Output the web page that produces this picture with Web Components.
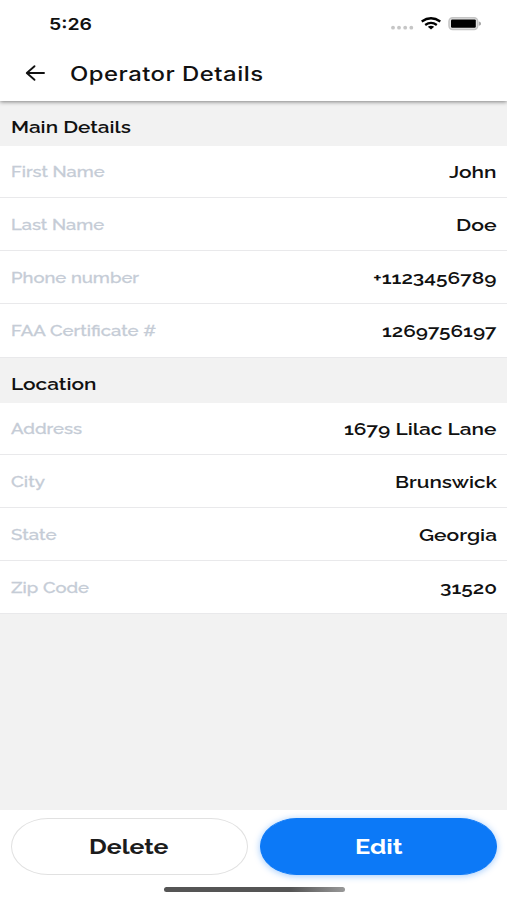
<!DOCTYPE html>
<html lang="en">
<head>
<meta charset="utf-8">
<title>Operator Details</title>
<style>
html,body{margin:0;height:100%;background:#f2f2f2;overflow:hidden}
body{font-family:Raleway,Lato,"Open Sans",sans-serif;color:#111}
</style>
</head>
<body>
<operator-screen></operator-screen>
<script>
function define(name, html, setup) {
  customElements.define(name, class extends HTMLElement {
    connectedCallback() {
      if (this.shadowRoot) return;
      this.attachShadow({mode: 'open'}).innerHTML = html;
      if (setup) setup.call(this, this.shadowRoot);
    }
  });
}

/* Wide text: stretches its glyphs horizontally to the given width. */
define('wide-text', `<style>
:host{display:block;flex:none;white-space:nowrap;line-height:24px;height:24px}
span{display:inline-block;transform-origin:0 50%}
</style><span></span>`, function (root) {
  const s = root.querySelector('span'), w = +this.getAttribute('w');
  s.textContent = this.getAttribute('text');
  this.style.width = w + 'px';
  s.style.transform = `scaleX(${w / s.getBoundingClientRect().width})`;
});

define('status-bar', `<style>
:host{display:flex;height:47px;padding:0 26px 0 49px;box-sizing:border-box;align-items:center;justify-content:space-between}
wide-text{font:600 16.5px/24px Inter,sans-serif}
svg{display:block}
</style><wide-text text="5:26" w="43"></wide-text>
<svg width="92" height="20" viewBox="389 14 92 20">
<g fill="#c6c6c6"><circle cx="393" cy="27.7" r="1.9"/><circle cx="399" cy="27.7" r="1.9"/><circle cx="405.2" cy="27.7" r="1.9"/><circle cx="411.3" cy="27.7" r="1.9"/></g>
<g fill="none" stroke="#000" stroke-width="2.3"><path d="M421.7 21.5Q431 15 440.3 21.5"/><path d="M425.2 25Q431 20.7 436.8 25"/></g>
<path d="M427.8 26.8Q431 24.7 434.2 26.8L431 29.5Z"/>
<rect x="449" y="17.8" width="28.7" height="11.6" rx="3.6" fill="#e4e4e4" stroke="#c4c4c4" stroke-width="1.5"/>
<rect x="451" y="19.4" width="24.8" height="8.4" rx="1.2"/>
<path d="M478.8 21.6Q481.2 22.2 481.2 23.7T478.8 25.8Z" fill="#aaa"/>
</svg>`);

define('app-bar', `<style>
:host{display:flex;height:54px;align-items:center;padding-left:25px;box-sizing:border-box}
svg{display:block;margin-right:24.5px;margin-top:-2px}
wide-text{font:500 19.5px/24px Inter,sans-serif;letter-spacing:.4px;margin-top:-1px}
</style><svg width="20" height="18" viewBox="0 0 20 18" fill="none" stroke="#111" stroke-width="1.9" stroke-linejoin="round" stroke-linecap="round"><path d="M19 9H2M9.5 2.2L1.8 9L9.5 15.8"/></svg>
<wide-text text="Operator Details" w="193.5"></wide-text>`);

define('section-title', `<style>
:host{display:flex;align-items:center;height:45px;padding:8px 0 0 10.5px;background:#f2f2f2;box-sizing:border-box}
wide-text{font-size:17px;font-weight:600}
</style><wide-text></wide-text>`, function (root) {
  const old = root.querySelector('wide-text'), t = document.createElement('wide-text');
  t.setAttribute('text', this.getAttribute('text'));
  t.setAttribute('w', this.getAttribute('w'));
  old.replaceWith(t);
});

define('detail-row', `<style>
:host{display:flex;align-items:center;justify-content:space-between;height:53.2px;padding:2px 10.5px 0 10.5px;background:#fff;border-bottom:1.5px solid #e9e9eb;box-sizing:border-box}
.l{font-size:15.5px;font-weight:500;color:#c5ccd6;-webkit-text-stroke:.3px #c5ccd6}
.v{font-size:17px;font-weight:600}
</style>`, function (root) {
  for (const [c, text, w] of [['l', this.getAttribute('label'), this.getAttribute('lw')], ['v', this.getAttribute('value'), this.getAttribute('vw')]]) {
    const t = document.createElement('wide-text');
    t.className = c;
    t.setAttribute('text', text);
    t.setAttribute('w', w);
    root.append(t);
  }
});

define('pill-button', `<style>
:host{display:flex;flex:1;height:57px;align-items:center;justify-content:center;box-sizing:border-box;border:1px solid #e1e1e1;border-radius:37px/28.5px;background:#fff;color:#1c1c1c}
:host([primary]){background:#0c79f7;border-color:#0c79f7;color:#fff;box-shadow:0 1px 7px #0c79f766}
</style><slot></slot>`);

define('operator-screen', `<style>
:host{display:flex;flex-direction:column;height:900px;width:507px;background:#f2f2f2}
header{background:#fff;height:101px;box-shadow:0 1px 4px #0007;position:relative}
main{flex:1}
.first{height:44.8px}
.first-row{height:52.2px}
footer{background:#fff;height:90.5px;box-sizing:border-box;padding:8.5px 10px 0 11px}
.buttons{display:flex;gap:12px}
.buttons wide-text{font-size:20px;font-weight:700;margin-top:1px}
.delete{margin-right:2px}
.home{width:181px;height:5px;border-radius:3px;background:linear-gradient(90deg,#555 0 70%,#999);margin:12px auto 0}
</style>
<header><status-bar></status-bar><app-bar></app-bar></header>
<main>
<section-title class="first" text="Main Details" w="120"></section-title>
<detail-row class="first-row" label="First Name" lw="93.5" value="John" vw="47.5"></detail-row>
<detail-row label="Last Name" lw="93" value="Doe" vw="40.5"></detail-row>
<detail-row label="Phone number" lw="128" value="+1123456789" vw="123.5"></detail-row>
<detail-row label="FAA Certificate #" lw="145" value="1269756197" vw="114.5"></detail-row>
<section-title text="Location" w="85.5"></section-title>
<detail-row class="first-row" label="Address" lw="71" value="1679 Lilac Lane" vw="152.5"></detail-row>
<detail-row label="City" lw="34" value="Brunswick" vw="102"></detail-row>
<detail-row label="State" lw="45.5" value="Georgia" vw="78"></detail-row>
<detail-row label="Zip Code" lw="78" value="31520" vw="57"></detail-row>
</main>
<footer><div class="buttons">
<pill-button><wide-text class="delete" text="Delete" w="79.5"></wide-text></pill-button>
<pill-button primary><wide-text text="Edit" w="47.5"></wide-text></pill-button>
</div><div class="home"></div></footer>`);
</script>
</body>
</html>
